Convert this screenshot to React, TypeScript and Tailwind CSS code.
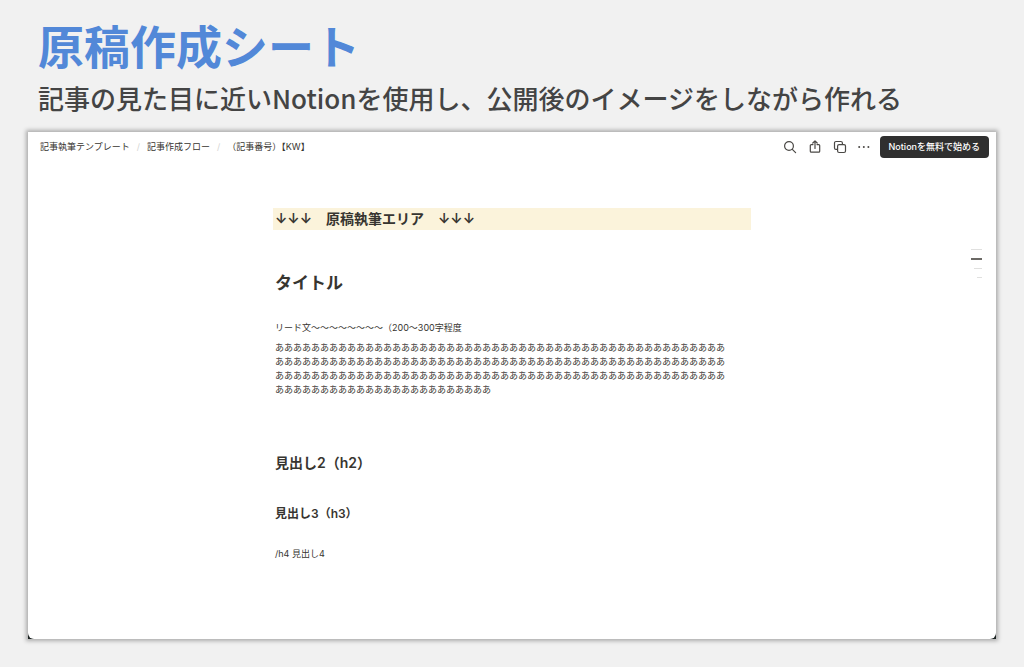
const breadcrumbs = ["記事執筆テンプレート", "記事作成フロー", "（記事番号）【KW】"]

const outline = [
    { label: "原稿執筆エリア", bar: "w-[11px] h-px bg-[#e0e0df]" },
    { label: "タイトル", bar: "w-[11px] h-0.5 bg-[#6b6965]" },
    { label: "見出し2", bar: "w-2 h-px bg-[#e0e0df]" },
    { label: "見出し3", bar: "w-[5px] h-px bg-[#e0e0df]" },
]

// characters on each line of the lead text
const leadLines = [50, 50, 50, 24]

const App = () => {
    return (
        <div className="flex min-h-screen flex-col bg-[#f1f1f1] px-7 pb-7 pt-4 font-['Noto_Sans_CJK_JP',sans-serif]">
            <header className="px-2.5">
                <h1 className="text-[46px] font-bold leading-[56px] text-[#5288d8]">原稿作成シート</h1>
                <p className="mt-1.5 text-[26px] font-medium leading-10 text-[#444]">
                    記事の見た目に近いNotionを使用し、公開後のイメージをしながら作れる
                </p>
            </header>

            <div className="mt-3.5 flex flex-1 flex-col bg-[#1c2322] font-[Inter,'Noto_Sans_CJK_JP',sans-serif] text-[#373530] shadow-[0_0_4px_2px_#acacac]">
                <div className="flex-1 rounded-b-md bg-white">
                    <TopBar />
                    <Article />
                </div>
            </div>
        </div>
    )
}

export default App

const TopBar = () => {
    return (
        <div className="flex h-7 items-center justify-between pl-3 pr-[7px] pt-0.5">
            <nav className="flex items-center text-[9px] leading-4">
                {breadcrumbs.map((name, i) => (
                    <span key={name} className="flex">
                        {i > 0 && <span className="px-[7px] text-[#d5d5d3]">/</span>}
                        <a href="#">{name}</a>
                    </span>
                ))}
            </nav>

            <div className="flex items-center gap-2.5 text-[#4a4845]">
                <div className="flex items-center gap-[11px]">
                    <button aria-label="検索">
                        <svg className="size-3.5" viewBox="0 0 14 14" fill="none" stroke="currentColor" strokeWidth="1.2" strokeLinecap="round">
                            <circle cx="6" cy="6" r="4.4" />
                            <path d="M9.3 9.3 12.6 12.6" />
                        </svg>
                    </button>
                    <button aria-label="共有">
                        <svg className="size-3.5" viewBox="0 0 14 14" fill="none" stroke="currentColor" strokeWidth="1.2" strokeLinecap="round" strokeLinejoin="round">
                            <path d="M5 4.6H3.3a1 1 0 0 0-1 1v5.6a1 1 0 0 0 1 1h7.4a1 1 0 0 0 1-1V5.6a1 1 0 0 0-1-1H9M7 8.4V1M4.8 3 7 .8 9.2 3" />
                        </svg>
                    </button>
                    <button aria-label="複製">
                        <svg className="size-3.5" viewBox="0 0 14 14" fill="none" stroke="currentColor" strokeWidth="1.2" strokeLinejoin="round">
                            <rect x="4.6" y="4.6" width="7.9" height="7.9" rx="1.5" />
                            <path d="M4.6 9.4H3A1.5 1.5 0 0 1 1.5 7.9V3A1.5 1.5 0 0 1 3 1.5h4.9A1.5 1.5 0 0 1 9.4 3v1.6" />
                        </svg>
                    </button>
                    <button aria-label="その他">
                        <svg className="h-3.5 w-3" viewBox="0 0 12 14" fill="currentColor">
                            <circle cx="1.2" cy="7" r="1" />
                            <circle cx="5.8" cy="7" r="1" />
                            <circle cx="10.4" cy="7" r="1" />
                        </svg>
                    </button>
                </div>
                <button className="h-[22px] rounded bg-[#2f2f2f] px-[9px] text-[9px] font-medium leading-4 text-white">
                    Notionを無料で始める
                </button>
            </div>
        </div>
    )
}

const Article = () => {
    return (
        <div className="relative">
            <main className="mx-auto w-[478px] max-w-full pt-12">
                <h2 className="bg-[#fbf3db] px-0.5 text-[14px] font-semibold leading-[22px]">↓↓↓　原稿執筆エリア　↓↓↓</h2>
                <div className="px-0.5">
                    <h2 className="mt-10 text-[17px] font-semibold leading-[26px]">タイトル</h2>
                    <p className="mt-[25px] text-[9px] leading-[14px]">リード文〜〜〜〜〜〜〜〜（200〜300字程度</p>
                    <p className="mt-1.5 text-[9px] leading-[14px]">
                        {leadLines.map((count, i) => (
                            <span key={i} className="block">{"あ".repeat(count)}</span>
                        ))}
                    </p>
                    <h2 className="mt-14 text-[14px] font-semibold leading-5">見出し2（h2）</h2>
                    <h3 className="mt-8 text-[12px] font-semibold leading-[18px]">見出し3（h3）</h3>
                    <p className="mt-6 text-[9px] leading-[14px]">/h4 見出し4</p>
                </div>
            </main>

            <nav className="absolute right-3.5 top-[89px] flex flex-col items-end gap-2">
                {outline.map(({ label, bar }) => (
                    <a key={label} href="#" aria-label={label} className={`block ${bar}`} />
                ))}
            </nav>
        </div>
    )
}
